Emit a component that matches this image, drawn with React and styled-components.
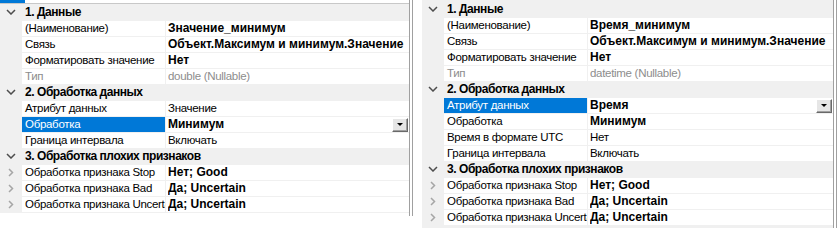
import React from "react";
import styled, { createGlobalStyle } from "styled-components";

const Global = createGlobalStyle`
  html, body { margin: 0; padding: 0; background: #ffffff; }
  body { font-family: "Liberation Sans", Arial, sans-serif; font-size: 12px; color: #000; }
`;

const GRAY = "#f0f0f0";
const LINE = "#a0a0a0";

const Page = styled.div`
  display: flex;
  align-items: flex-start;
  gap: 9px;
  width: 839px;
  height: 228px;
  overflow: hidden;
`;

const Frame = styled.div`
  width: ${(p) => p.$width}px;
  flex: none;
  border-right: 1px solid ${LINE};
  padding-right: 2px;
  box-sizing: border-box;
  height: ${(p) => p.$height}px;
`;

const Inner = styled.div`
  height: 100%;
  border-right: 1px solid ${LINE};
  background: #ffffff;
  display: flex;
  flex-direction: column;
`;

const TopStrip = styled.div`
  height: 3px;
  display: flex;
`;

const TabMark = styled.div`
  width: 25px;
  background: #0078d7;
`;

const Grid = styled.div`
  background: ${GRAY};
  border-top: ${(p) => (p.$topLine ? `1px solid #c8c8c8` : "none")};
  padding-top: ${(p) => p.$padTop}px;
  padding-bottom: ${(p) => p.$padBottom}px;
  flex: ${(p) => (p.$fill ? 1 : "none")};
  display: flex;
  flex-direction: column;
`;

const GroupRow = styled.div`
  height: 16px;
  display: flex;
  align-items: center;
  font-weight: bold;
  white-space: nowrap;
`;

const Gutter = styled.div`
  width: 22px;
  flex: none;
  display: flex;
  align-items: center;
  justify-content: center;
  height: 100%;
`;

const GroupTitle = styled.span`
  padding-left: 3px;
  line-height: 16px;
  letter-spacing: -0.45px;
`;

const PropRow = styled.div`
  height: 16px;
  display: flex;
  box-sizing: border-box;
  padding-top: 1px;
`;

const Label = styled.div`
  width: 143px;
  flex: none;
  box-sizing: border-box;
  padding-left: 3px;
  line-height: 15px;
  font-size: 11.5px;
  letter-spacing: -0.3px;
  white-space: nowrap;
  overflow: hidden;
  background: ${(p) => (p.$selected ? "#0078d7" : "#ffffff")};
  color: ${(p) => (p.$selected ? "#ffffff" : p.$disabled ? "#8d8d8d" : "#000")};
  margin-right: 1px;
`;

const Value = styled.div`
  flex: 1;
  min-width: 0;
  display: flex;
  align-items: center;
  background: #ffffff;
  padding-left: 2px;
  line-height: 15px;
  white-space: nowrap;
  overflow: hidden;
  font-weight: ${(p) => (p.$bold ? "bold" : "normal")};
  font-size: ${(p) => (p.$bold ? "12px" : "11.5px")};
  letter-spacing: ${(p) => (p.$bold ? "0" : "-0.3px")};
  color: ${(p) => (p.$disabled ? "#8d8d8d" : "#000")};
`;

const ValueText = styled.span`
  flex: 1;
  min-width: 0;
  overflow: hidden;
`;

const DropButton = styled.div`
  width: 16px;
  height: 14px;
  flex: none;
  box-sizing: border-box;
  background: #e6e6e6;
  border-top: 1px solid #ffffff;
  border-left: 1px solid #ffffff;
  border-right: 1px solid #696969;
  border-bottom: 1px solid #696969;
  box-shadow: inset -1px -1px 0 #a0a0a0;
  display: flex;
  align-items: center;
  justify-content: center;
  margin-right: 1px;
`;

const Tri = styled.div`
  width: 0;
  height: 0;
  border-left: 3px solid transparent;
  border-right: 3px solid transparent;
  border-top: 3px solid #000;
`;

const ChevronDown = () => (
  <svg width="10" height="6" viewBox="0 0 10 6">
    <path d="M1 1 L5 5 L9 1" fill="none" stroke="#4d4d4d" strokeWidth="1.5" />
  </svg>
);

const ChevronRight = () => (
  <svg width="6" height="9" viewBox="0 0 6 9">
    <path d="M1 1 L4.5 4.5 L1 8" fill="none" stroke="#a6a6a6" strokeWidth="1.5" />
  </svg>
);

const makeData = (name, type, attr, right) => [
  {
    title: "1. Данные",
    rows: [
      { label: "(Наименование)", value: name, bold: true },
      { label: "Связь", value: "Объект.Максимум и минимум.Значение", bold: true },
      { label: "Форматировать значение", value: "Нет", bold: true },
      { label: "Тип", value: type, disabled: true },
    ],
  },
  {
    title: "2. Обработка данных",
    rows: right
      ? [
          { label: "Атрибут данных", value: attr, bold: true, selected: true },
          { label: "Обработка", value: "Минимум", bold: true },
          { label: "Время в формате UTC", value: "Нет" },
          { label: "Граница интервала", value: "Включать" },
        ]
      : [
          { label: "Атрибут данных", value: attr },
          { label: "Обработка", value: "Минимум", bold: true, selected: true },
          { label: "Граница интервала", value: "Включать" },
        ],
  },
  {
    title: "3. Обработка плохих признаков",
    rows: [
      { label: "Обработка признака Stop", value: "Нет; Good", bold: true, expandable: true },
      { label: "Обработка признака Bad", value: "Да; Uncertain", bold: true, expandable: true },
      { label: "Обработка признака Uncertain", value: "Да; Uncertain", bold: true, expandable: true },
    ],
  },
];

const PropertyGrid = ({ groups }) =>
  groups.map((g) => (
    <React.Fragment key={g.title}>
      <GroupRow>
        <Gutter>
          <ChevronDown />
        </Gutter>
        <GroupTitle>{g.title}</GroupTitle>
      </GroupRow>
      {g.rows.map((r) => (
        <PropRow key={r.label}>
          <Gutter>{r.expandable && <ChevronRight />}</Gutter>
          <Label $selected={r.selected} $disabled={r.disabled}>
            {r.label}
          </Label>
          <Value $bold={r.bold} $disabled={r.disabled}>
            <ValueText>{r.value}</ValueText>
            {r.selected && (
              <DropButton>
                <Tri />
              </DropButton>
            )}
          </Value>
        </PropRow>
      ))}
    </React.Fragment>
  ));

export default function App() {
  const left = makeData("Значение_минимум", "double (Nullable)", "Значение", false);
  const right = makeData("Время_минимум", "datetime (Nullable)", "Время", true);
  return (
    <>
      <Global />
      <Page>
        <Frame $width={413} $height={216}>
          <Inner>
            <TopStrip>
              <TabMark />
            </TopStrip>
            <Grid $topLine $padTop={0} $padBottom={1}>
              <PropertyGrid groups={left} />
            </Grid>
          </Inner>
        </Frame>
        <Frame $width={415} $height={228}>
          <Inner>
            <Grid $fill $padTop={1} $padBottom={0}>
              <PropertyGrid groups={right} />
            </Grid>
          </Inner>
        </Frame>
      </Page>
    </>
  );
}
